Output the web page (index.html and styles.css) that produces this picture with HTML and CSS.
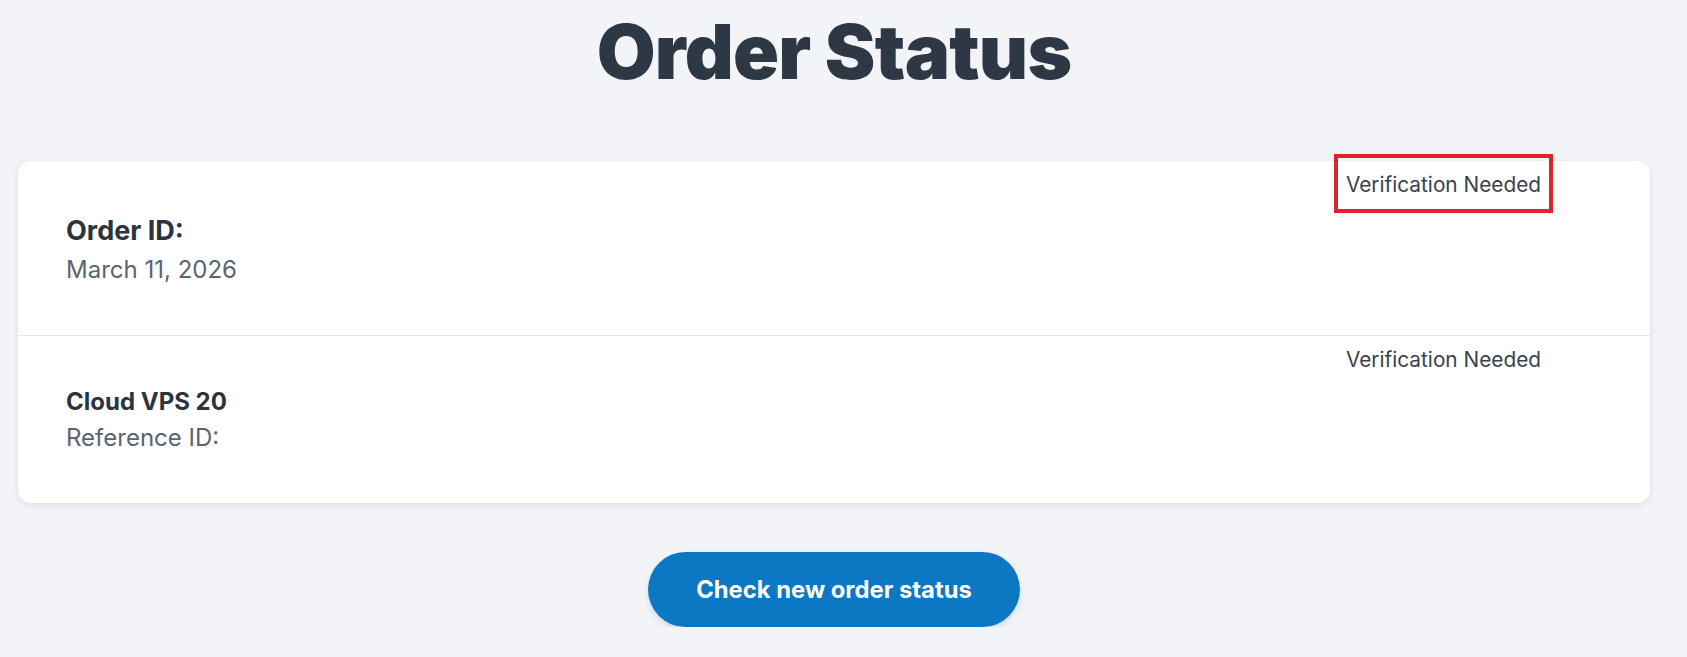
FILE: index.html
```html
<!DOCTYPE html>
<html lang="en">
<head>
<meta charset="utf-8">
<title>Order Status</title>
<link rel="stylesheet" href="styles.css">
</head>
<body>
<main class="page">
  <h1 class="title">Order Status</h1>
  <section class="card">
    <div class="row row--order">
      <div class="info">
        <div class="label">Order ID:</div>
        <div class="sub">March 11, 2026</div>
      </div>
      <span class="status status--flagged">Verification Needed</span>
    </div>
    <div class="row row--item">
      <div class="info">
        <div class="label">Cloud VPS 20</div>
        <div class="sub">Reference ID:</div>
      </div>
      <span class="status">Verification Needed</span>
    </div>
  </section>
  <div class="actions">
    <button class="btn" type="button">Check new order status</button>
  </div>
</main>
</body>
</html>
```
FILE: styles.css
```css
* { box-sizing: border-box; }
html, body {
  margin: 0;
  background: #f3f4f8;
  font-family: Inter, "Noto Sans", Arial, sans-serif;
  color: #2b333d;
}
.page {
  padding: 13px 37px 0 18px;
}
.title {
  margin: 0;
  text-align: center;
  font-size: 76px;
  line-height: 76px;
  font-weight: 900;
  letter-spacing: -0.01em;
  color: #2e3845;
}
.card {
  margin-top: 72px;
  background: #fff;
  border-radius: 13px;
  box-shadow: 0 2px 6px rgba(30, 40, 60, 0.10);
}
.row {
  display: flex;
  justify-content: space-between;
  align-items: flex-start;
  padding: 0 104px 0 48px;
}
.row--order {
  border-bottom: 1px solid #e6e8ec;
}
.row--order .info { padding: 51px 0 48px; }
.row--item .info { padding: 48px 0 48px; }
.row--order .label {
  font-size: 27px;
  line-height: 38px;
}
.row--order .sub { margin-top: 3px; }
.row--item .sub { margin-top: 1px; }
.label {
  font-size: 24px;
  line-height: 36px;
  font-weight: 700;
  color: #2b333d;
}
.sub {
  font-size: 24px;
  line-height: 34px;
  color: #5b6473;
}
.status {
  font-size: 20.8px;
  line-height: 30px;
  padding: 9px 5px 6px;
  color: #3a4250;
}
.status--flagged {
  outline: 4px solid #e0242a;
  outline-offset: 3px;
}
.actions {
  display: flex;
  justify-content: center;
  margin-top: 49px;
}
.btn {
  height: 75px;
  padding: 0 48px;
  border: 0;
  border-radius: 38px;
  background: #0c77c2;
  color: #fff;
  font-family: Inter, "Noto Sans", Arial, sans-serif;
  font-size: 23.8px;
  font-weight: 700;
  box-shadow: 0 3px 6px rgba(20, 60, 110, 0.15);
}
```
